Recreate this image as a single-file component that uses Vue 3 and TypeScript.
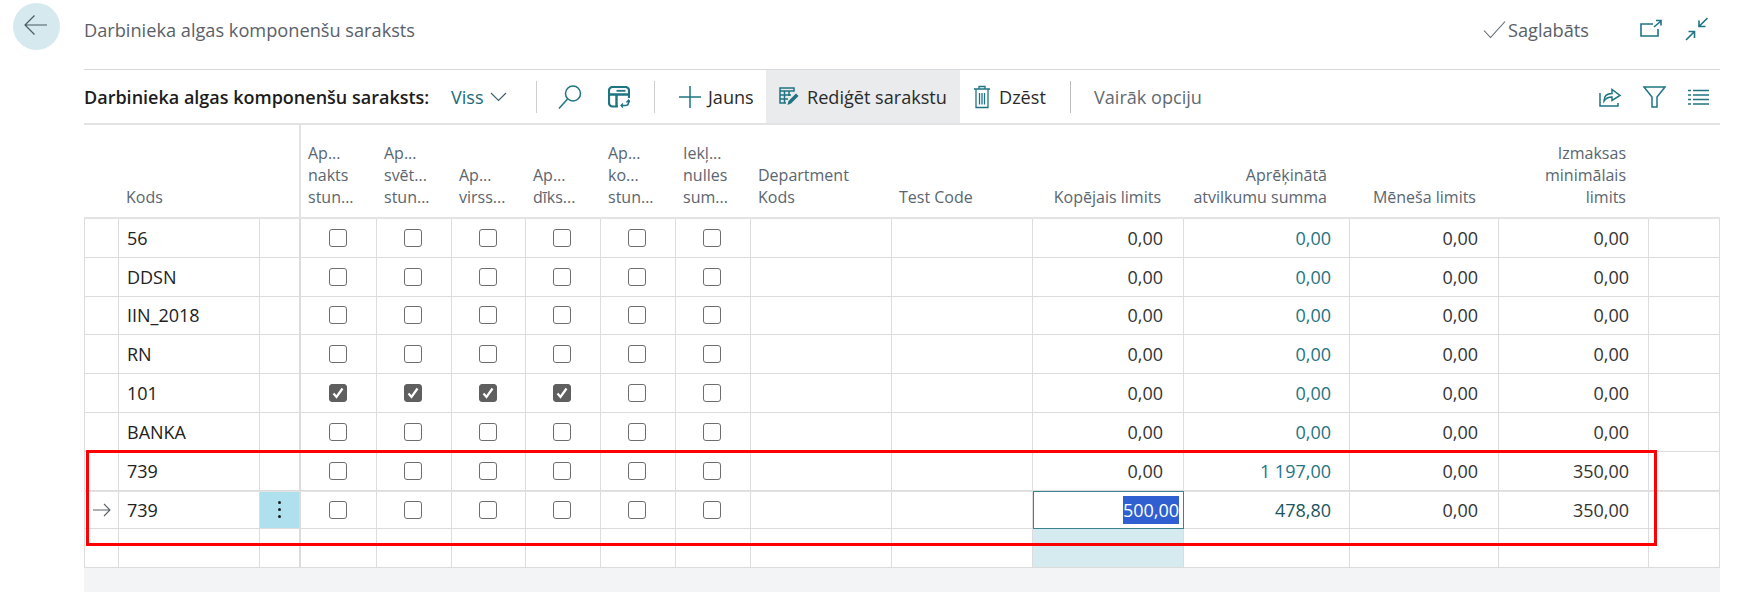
<template>
  <div class="page">
    <div class="back-col">
      <button class="back-btn" aria-label="Back">
        <svg width="26" height="22" viewBox="0 0 26 22" fill="none" stroke="#4a5a62" stroke-width="1.2">
          <path d="M24 11H2M11.500 1.500L2 11l9.500 9.500" />
        </svg>
      </button>
    </div>

    <div class="main">
      <div class="title-bar">
        <span class="page-title">Darbinieka algas komponenšu saraksts</span>
        <div class="title-actions">
          <svg class="saved-check" width="24" height="20" viewBox="0 0 24 20" fill="none" stroke="#5b6670" stroke-width="1.100">
            <path d="M1 10.500l6.500 7L22 1.500" />
          </svg>
          <span class="saved-text">Saglabāts</span>
          <svg class="open-icon" width="24" height="20" viewBox="0 0 24 20" fill="none" stroke="#1f7482" stroke-width="1.600">
            <path d="M14 5H2v12h17v-7M15 8l7-6M17 1.500h5v5" />
          </svg>
          <svg class="collapse-icon" width="24" height="24" viewBox="0 0 24 24" fill="none" stroke="#1f7482" stroke-width="1.600">
            <path d="M22.500 1L14 9.500M14 3.500v6h6.500M1 23l8.500-8.500M3.500 14.500h6V21" />
          </svg>
        </div>
      </div>

      <div class="toolbar">
        <span class="list-name">Darbinieka algas komponenšu saraksts:</span>
        <button class="tool view-btn">
          Viss
          <svg width="17" height="10" viewBox="0 0 17 10" fill="none" stroke="#3c5c68" stroke-width="1.100"><path d="M1 1l7.500 7.500L16 1" /></svg>
        </button>
        <i class="sep sep-a"></i>
        <svg class="ic-search" width="24" height="26" viewBox="0 0 24 26" fill="none" stroke="#1f7482" stroke-width="1.500">
          <circle cx="15" cy="9.500" r="7.500" /><path d="M9.500 15L1 24.500" />
        </svg>
        <svg class="ic-layout" width="22" height="22" viewBox="0 0 22 22" fill="none" stroke="#1f7482" stroke-width="2.200">
          <path d="M10 20.500H4.500a3.500 3.500 0 0 1-3.500-3.500V4.500A3.500 3.500 0 0 1 4.500 1h13A3.500 3.500 0 0 1 21 4.500V12" />
          <path d="M1.500 8.500h19M8.500 8.500V20" stroke-width="2.400" />
          <path d="M8.500 4.800h9" stroke-width="1.800" />
          <path d="M3.500 11.500h3" stroke="#fff" stroke-width="1.500" />
          <path d="M13 19.500h4.500a3 3 0 0 0 3-3V15" stroke-width="1.500" />
          <path d="M18.500 16.500l2 -2.500 2 2.500M15 17.500l-2 2 2 2" stroke-width="1.300" />
        </svg>
        <i class="sep sep-b"></i>
        <button class="tool new-btn">
          <svg width="22" height="22" viewBox="0 0 22 22" stroke="#1f7482" stroke-width="1.500"><path d="M11 0v22M0 11h22" /></svg>
          Jauns
        </button>
        <button class="tool edit-btn">
          <svg width="20" height="19" viewBox="0 0 20 19" fill="none" stroke="#1f7482" stroke-width="1.500">
            <path d="M1 1h14v3H1zM1 4v12h6M1 8h11M1 12h8M5.500 4v12M10 4v5" />
            <path d="M8.500 18l1-4 7.500-7.500 2.500 2.500L12 16.500z" fill="#1f7482" stroke="none" />
          </svg>
          Rediģēt sarakstu
        </button>
        <button class="tool delete-btn">
          <svg width="16" height="24" viewBox="0 0 16 24" fill="none" stroke="#1f7482" stroke-width="1.300">
            <path d="M0 4h16M5 4V1.500h6V4M2 4v18.500h12V4M5.500 8v11.500M8 8v11.500M10.500 8v11.500" />
          </svg>
          Dzēst
        </button>
        <i class="sep sep-c"></i>
        <span class="more">Vairāk opciju</span>
        <div class="toolbar-right">
          <svg width="22" height="20" viewBox="0 0 22 20" fill="none" stroke="#1f7482" stroke-width="1.500">
            <path d="M1 6v13h18v-3M5 14c0-5 3-7.500 8-7.500V2.500l8 6-8 5V10c-3.500 0-6 1-8 4z" />
          </svg>
          <svg width="23" height="22" viewBox="0 0 23 22" fill="none" stroke="#1f7482" stroke-width="1.500">
            <path d="M1 1h21l-8 10v10H9V11z" />
          </svg>
          <svg width="21" height="16" viewBox="0 0 21 16" stroke="#1f7482" stroke-width="1.500">
            <path d="M5 1.500h16M5 6h16M5 10.500h16M5 15h16M0 1.500h3M0 6h3M0 10.500h3M0 15h3" />
          </svg>
        </div>
      </div>

      <table class="grid">
        <colgroup>
          <col v-for="(w, i) in colWidths" :key="i" :style="{ width: w + 'px' }" />
        </colgroup>
        <thead>
          <tr>
            <th class="no-cell" colspan="1"></th>
            <th class="th-left">Kods</th>
            <th class="th-frozen"></th>
            <th v-for="h in boolHeaders" :key="h.join()" class="th-left">
              <span v-for="l in h" :key="l" class="hline">{{ l }}</span>
            </th>
            <th class="th-left"><span class="hline">Department</span><span class="hline">Kods</span></th>
            <th class="th-left">Test Code</th>
            <th class="th-right">Kopējais limits</th>
            <th class="th-right"><span class="hline">Aprēķinātā</span><span class="hline">atvilkumu summa</span></th>
            <th class="th-right">Mēneša limits</th>
            <th class="th-right"><span class="hline">Izmaksas</span><span class="hline">minimālais</span><span class="hline">limits</span></th>
            <th></th>
          </tr>
        </thead>
        <tbody>
          <tr v-for="(r, idx) in rows" :key="idx" :class="{ current: r.current }">
            <td class="marker">
              <svg v-if="r.current" width="20" height="14" viewBox="0 0 20 14" fill="none" stroke="#5a6268" stroke-width="1.100">
                <path d="M1 7h17M12 1l6 6-6 6" />
              </svg>
            </td>
            <td class="code">{{ r.code }}</td>
            <td class="frozen" :class="{ dots: r.current }">
              <template v-if="r.current"><b></b><b></b><b></b></template>
            </td>
            <td v-for="n in 6" :key="n" class="check-cell">
              <span class="check" :class="{ on: r.checked && n <= 4 }">
                <svg v-if="r.checked && n <= 4" width="12" height="12" viewBox="0 0 12 12" fill="none" stroke="#fff" stroke-width="2.200">
                  <path d="M1.500 6.500l3 3.500L10.500 1.500" />
                </svg>
              </span>
            </td>
            <td></td>
            <td></td>
            <td class="num" :class="{ editing: r.current }">
              <mark v-if="r.current">{{ r.total }}</mark>
              <template v-else>{{ r.total }}</template>
            </td>
            <td class="num link" :class="{ dark: r.current }">{{ r.calc }}</td>
            <td class="num">{{ r.month }}</td>
            <td class="num wide">{{ r.min }}</td>
            <td></td>
          </tr>
          <tr class="blank">
            <td></td><td></td><td class="frozen"></td>
            <td v-for="n in 6" :key="n"></td>
            <td></td><td></td>
            <td class="tinted"></td>
            <td></td><td></td><td></td><td></td>
          </tr>
        </tbody>
      </table>

      <div class="footer-band"></div>
    </div>

    <div class="red-box"></div>
  </div>
</template>

<script setup lang="ts">
interface Row {
  code: string
  checked?: boolean
  current?: boolean
  total: string
  calc: string
  month: string
  min: string
}

const colWidths = [35, 141, 41, 76, 75, 74, 75, 75, 75, 141, 141, 151, 166, 149, 150, 71]

const boolHeaders = [
  ['Ap...', 'nakts', 'stun...'],
  ['Ap...', 'svēt...', 'stun...'],
  ['Ap...', 'virss...'],
  ['Ap...', 'dīks...'],
  ['Ap...', 'ko...', 'stun...'],
  ['Iekļ...', 'nulles', 'sum...']
]

const zero = { total: '0,00', calc: '0,00', month: '0,00', min: '0,00' }

const rows: Row[] = [
  { code: '56', ...zero },
  { code: 'DDSN', ...zero },
  { code: 'IIN_2018', ...zero },
  { code: 'RN', ...zero },
  { code: '101', checked: true, ...zero },
  { code: 'BANKA', ...zero },
  { code: '739', total: '0,00', calc: '1 197,00', month: '0,00', min: '350,00' },
  { code: '739', current: true, total: '500,00', calc: '478,80', month: '0,00', min: '350,00' }
]
</script>

<style>
html,
body {
  background: #fff;
  overflow: hidden;
}
</style>

<style scoped>
.page {
  position: relative;
  display: flex;
  width: 1744px;
  height: 592px;
  overflow: hidden;
  font-family: "Open Sans", "Noto Sans", sans-serif;
  color: #212121;
  background: #fff;
}

.back-col {
  width: 84px;
  padding: 3px 0 0 13px;
  box-sizing: border-box;
  flex: none;
}

.back-btn {
  display: flex;
  align-items: center;
  justify-content: center;
  width: 47px;
  height: 47px;
  padding: 0 2px 4px 0;
  border: 0;
  border-radius: 50%;
  background: #d5e9ee;
}

.main {
  width: 1636px;
  flex: none;
  display: flex;
  flex-direction: column;
}

.title-bar {
  display: flex;
  align-items: center;
  height: 70px;
  padding-bottom: 9px;
  box-sizing: border-box;
  border-bottom: 1px solid #d9d9d9;
}

.page-title {
  font-size: 18.200px;
  color: #5a6068;
}

.title-actions {
  margin-left: auto;
  display: flex;
  align-items: center;
  padding-right: 11px;
}

.saved-text {
  font-size: 18.200px;
  color: #5a6068;
  margin: 0 50px 0 1px;
}

.collapse-icon {
  margin-left: 22px;
  margin-top: -2px;
}

.open-icon {
  margin-top: -2px;
}

.toolbar {
  display: flex;
  align-items: center;
  height: 55px;
  border-bottom: 2px solid #e3e3e3;
  box-sizing: border-box;
}

.list-name {
  font-size: 18px;
  font-weight: 600;
  color: #1c1c1c;
  width: 367px;
  white-space: nowrap;
}

.tool {
  display: flex;
  align-items: center;
  height: 53px;
  padding: 0;
  border: 0;
  background: none;
  font: inherit;
  font-size: 18.100px;
  color: #2a2a2a;
  white-space: nowrap;
}

.view-btn {
  color: #1d6b78;
  gap: 6px;
  font-weight: 500;
  width: 85px;
}

.sep {
  width: 1px;
  height: 32px;
  background: #cfcfcf;
  flex: none;
}

.ic-search {
  margin-left: 21px;
}

.ic-layout {
  margin-left: 26px;
}

.sep-b {
  margin-left: 24px;
}

.new-btn {
  margin-left: 24px;
  gap: 7px;
  width: 87px;
}

.edit-btn {
  background: #e9ebec;
  width: 194px;
  padding-left: 13px;
  box-sizing: border-box;
  gap: 8px;
}

.delete-btn {
  margin-left: 14px;
  gap: 9px;
  width: 72px;
}

.sep-c {
  margin-left: 24px;
  background: #bdbdbd;
}

.more {
  margin-left: 23px;
  font-size: 18.100px;
  color: #5f6a72;
}

.toolbar-right {
  margin-left: auto;
  display: flex;
  align-items: center;
  gap: 22px;
  padding-right: 11px;
}

.grid {
  width: 1636px;
  table-layout: fixed;
  border-collapse: separate;
  border-spacing: 0;
}

.grid th {
  height: 94px;
  padding: 0 20px 9px 7px;
  box-sizing: border-box;
  vertical-align: bottom;
  font-weight: 400;
  font-size: 16px;
  line-height: 22px;
  color: #5a6670;
  border-bottom: 2px solid #e3e3e3;
  white-space: nowrap;
}

.grid .th-left {
  text-align: left;
}

.grid .th-right {
  text-align: right;
  padding-right: 23px;
}

.grid .th-frozen {
  border-right: 2px solid #e3e3e3;
}

.hline {
  display: block;
}

.grid td {
  height: 38.800px;
  padding: 0;
  box-sizing: border-box;
  border-bottom: 1px solid #dcdcdc;
  border-right: 1px solid #dcdcdc;
  font-size: 18px;
}

.grid td:first-child {
  border-left: 1px solid #dcdcdc;
}

.grid tr.current td {
  border-top: 1px solid #e3e3e3;
}

.marker {
  text-align: center;
  line-height: 0;
}

.code {
  padding-left: 8px !important;
  color: #222;
}

.grid td.frozen {
  border-right: 2px solid #dcdcdc;
}

.grid td.dots {
  background: #aee0ed;
  text-align: center;
  line-height: 0;
}

.dots b {
  display: block;
  width: 3px;
  height: 3px;
  margin: 4px auto;
  border-radius: 50%;
  background: #1d1d1d;
}

.check-cell {
  text-align: center;
  line-height: 0;
  padding-right: 2px !important;
}

.check {
  display: inline-flex;
  align-items: center;
  justify-content: center;
  width: 18px;
  height: 18px;
  box-sizing: border-box;
  border: 1.500px solid #6e6e6e;
  border-radius: 3px;
  background: #fff;
  vertical-align: middle;
}

.check.on {
  background: #5f5f5f;
  border-color: #5f5f5f;
}

.num {
  text-align: right;
  padding-right: 20px !important;
  color: #333;
}

.num.wide {
  padding-right: 19px !important;
}

.num.link {
  color: #1f7482;
  padding-right: 18px !important;
}

.num.link.dark {
  color: #1b5560;
}

.grid tr.current td.editing {
  border: 1px solid #3c8290;
  padding-right: 4px !important;
  background: #fff;
}

mark {
  background: #2f5fd0;
  color: #fff;
  padding: 2px 0;
}

.grid td.tinted {
  background: #d6ebef;
}

.footer-band {
  flex: 1;
  background: #f3f4f6;
}

.red-box {
  position: absolute;
  left: 86px;
  top: 450px;
  width: 1571px;
  height: 96px;
  box-sizing: border-box;
  border: 3px solid #ff0000;
  pointer-events: none;
}
</style>
